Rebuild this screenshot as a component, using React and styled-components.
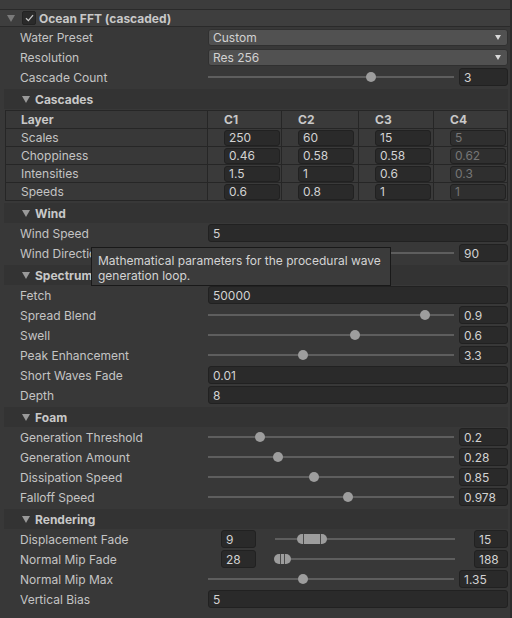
import React from "react";
import styled, { createGlobalStyle } from "styled-components";

const GlobalStyle = createGlobalStyle`
  body {
    margin: 0;
    background: #383838;
    font-family: Inter, "Noto Sans", sans-serif;
    font-size: 12px;
    color: #c4c4c4;
  }
`;

const Panel = styled.div`
  position: relative;
  width: 512px;
  height: 618px;
  overflow: hidden;
  background: #383838;
  box-sizing: border-box;
  border-right: 2px solid #2c2c2c;
`;

const TopStrip = styled.div`
  height: 9px;
  background: #3c3c3c;
  border-bottom: 1px solid #2a2a2a;
`;

const ComponentHeader = styled.div`
  display: flex;
  align-items: center;
  height: 16px;
  background: #3e3e3e;
  border-bottom: 1px solid #2a2a2a;
  padding-left: 7px;
`;

const FoldArrow = styled.span`
  width: 0;
  height: 0;
  border-left: 4px solid transparent;
  border-right: 4px solid transparent;
  border-top: 7px solid ${p => p.$color || "#7a7a7a"};
  margin-right: ${p => p.$gap || 6}px;
`;

const CheckBox = styled.span`
  display: flex;
  align-items: center;
  justify-content: center;
  width: 12px;
  height: 12px;
  background: #2a2a2a;
  border: 1px solid #232323;
  border-radius: 2px;
  margin-right: 3px;
`;

const HeaderTitle = styled.span`
  font-weight: 700;
  color: #c8c8c8;
`;

const Body = styled.div`
  padding: 0 2px 0 4px;
`;

const Row = styled.div`
  display: grid;
  grid-template-columns: 188px 1fr;
  align-items: center;
  height: 20px;
  padding-left: 16px;
`;

const Label = styled.span`
  white-space: nowrap;
  overflow: hidden;
  color: #c4c4c4;
`;

const Dropdown = styled.div`
  display: flex;
  align-items: center;
  justify-content: space-between;
  height: 17px;
  box-sizing: border-box;
  padding: 0 6px 0 4px;
  background: #515151;
  border: 1px solid #303030;
  border-radius: 3px;
  color: #d2d2d2;
`;

const DropArrow = styled.span`
  width: 0;
  height: 0;
  border-left: 3.5px solid transparent;
  border-right: 3.5px solid transparent;
  border-top: 5px solid #d8d8d8;
`;

const Field = styled.div`
  display: flex;
  align-items: center;
  height: ${p => p.$h || 18}px;
  width: ${p => (p.$w ? `${p.$w}px` : "auto")};
  box-sizing: border-box;
  padding-left: 4px;
  background: ${p => (p.$disabled ? "#2f2f2f" : "#2a2a2a")};
  border: 1px solid #212121;
  border-radius: 3px;
  color: ${p => (p.$disabled ? "#767676" : "#d2d2d2")};
`;

const SliderWrap = styled.div`
  display: grid;
  grid-template-columns: 1fr 49px;
  gap: 5px;
  align-items: center;
`;

const Track = styled.div`
  position: relative;
  height: 2px;
  background: #5e5e5e;
`;

const Thumb = styled.span`
  position: absolute;
  top: -4px;
  width: 10px;
  height: 10px;
  margin-left: -5px;
  border-radius: 50%;
  background: #9d9d9d;
`;

const MinMaxWrap = styled.div`
  display: grid;
  grid-template-columns: 35px 1fr 34px;
  gap: 19px;
  align-items: center;
  padding-left: 13px;
`;

const RangeThumb = styled.span`
  position: absolute;
  top: -4px;
  height: 10px;
  border-radius: 5px;
  background: #9d9d9d;
  &::before,
  &::after {
    content: "";
    position: absolute;
    top: 0;
    width: 1px;
    height: 10px;
    background: #4a4a4a;
  }
  &::before {
    left: ${p => p.$inset}px;
  }
  &::after {
    right: ${p => p.$inset}px;
  }
`;

const SectionHeader = styled.div`
  display: flex;
  align-items: center;
  height: 20px;
  margin-top: 2px;
  padding-left: 18px;
  background: #333333;
  font-weight: 700;
  color: #c8c8c8;
`;

const Table = styled.div`
  display: grid;
  grid-template-columns: 201px 74px 77px 75px 1fr;
  grid-auto-rows: 18px;
  margin: 1px 0 1px 1px;
  border: 1px solid #262626;
  border-bottom: none;
`;

const Cell = styled.div`
  display: flex;
  align-items: center;
  padding-left: ${p => (p.$first ? 15 : 16)}px;
  border-bottom: 1px solid #262626;
  border-left: ${p => (p.$first ? "none" : "1px solid #262626")};
  font-weight: ${p => (p.$head ? 700 : 400)};
  color: ${p => (p.$head ? "#c8c8c8" : "#c4c4c4")};
  background: ${p => (p.$first ? "transparent" : "#3a3a3a")};
`;

const Tooltip = styled.div`
  position: absolute;
  left: 91px;
  top: 247px;
  width: 300px;
  height: 39px;
  box-sizing: border-box;
  padding: 5px 6px;
  background: #3b3b3b;
  border: 1px solid #191919;
  color: #d4d4d4;
  line-height: 15px;
`;

const Slider = ({ pct, value }) => (
  <SliderWrap>
    <Track>
      <Thumb style={{ left: `calc(5px + (100% - 10px) * ${pct})` }} />
    </Track>
    <Field>{value}</Field>
  </SliderWrap>
);

const MinMax = ({ min, max, left, width, inset }) => (
  <MinMaxWrap>
    <Field>{min}</Field>
    <Track>
      <RangeThumb $inset={inset} style={{ left, width }} />
    </Track>
    <Field>{max}</Field>
  </MinMaxWrap>
);

const Section = ({ title }) => (
  <SectionHeader>
    <FoldArrow $color="#9a9a9a" $gap={5} />
    {title}
  </SectionHeader>
);

const cascades = [
  ["Scales", "250", "60", "15", "5"],
  ["Choppiness", "0.46", "0.58", "0.58", "0.62"],
  ["Intensities", "1.5", "1", "0.6", "0.3"],
  ["Speeds", "0.6", "0.8", "1", "1"],
];

const sliderRow = (label, pct, value) => (
  <Row key={label}>
    <Label>{label}</Label>
    <Slider pct={pct} value={value} />
  </Row>
);

const fieldRow = (label, value) => (
  <Row key={label}>
    <Label>{label}</Label>
    <Field>{value}</Field>
  </Row>
);

export default function App() {
  return (
    <Panel>
      <GlobalStyle />
      <TopStrip />
      <ComponentHeader>
        <FoldArrow $gap={7} />
        <CheckBox>
          <svg width="9" height="8" viewBox="0 0 9 8">
            <path d="M1 4.2 L3.4 6.6 L8 1.2" fill="none" stroke="#c8c8c8" strokeWidth="1.3" />
          </svg>
        </CheckBox>
        <HeaderTitle>Ocean FFT (cascaded)</HeaderTitle>
      </ComponentHeader>
      <Body>
        <Row>
          <Label>Water Preset</Label>
          <Dropdown>Custom<DropArrow /></Dropdown>
        </Row>
        <Row>
          <Label>Resolution</Label>
          <Dropdown>Res 256<DropArrow /></Dropdown>
        </Row>
        {sliderRow("Cascade Count", 0.668, "3")}

        <Section title="Cascades" />
        <Table>
          <Cell $first $head>Layer</Cell>
          <Cell $head>C1</Cell>
          <Cell $head>C2</Cell>
          <Cell $head>C3</Cell>
          <Cell $head>C4</Cell>
          {cascades.map(r => (
            <React.Fragment key={r[0]}>
              <Cell $first>{r[0]}</Cell>
              {r.slice(1).map((v, i) => (
                <Cell key={i}>
                  <Field $h={16} $w={56} $disabled={i === 3}>{v}</Field>
                </Cell>
              ))}
            </React.Fragment>
          ))}
        </Table>

        <Section title="Wind" />
        {fieldRow("Wind Speed", "5")}
        {sliderRow("Wind Direction", 0.25, "90")}

        <Section title="Spectrum" />
        {fieldRow("Fetch", "50000")}
        {sliderRow("Spread Blend", 0.898, "0.9")}
        {sliderRow("Swell", 0.6, "0.6")}
        {sliderRow("Peak Enhancement", 0.383, "3.3")}
        {fieldRow("Short Waves Fade", "0.01")}
        {fieldRow("Depth", "8")}

        <Section title="Foam" />
        {sliderRow("Generation Threshold", 0.2, "0.2")}
        {sliderRow("Generation Amount", 0.277, "0.28")}
        {sliderRow("Dissipation Speed", 0.426, "0.85")}
        {sliderRow("Falloff Speed", 0.57, "0.978")}

        <Section title="Rendering" />
        <Row>
          <Label>Displacement Fade</Label>
          <MinMax min="9" max="15" left="22px" width="30px" inset={6} />
        </Row>
        <Row>
          <Label>Normal Mip Fade</Label>
          <MinMax min="28" max="188" left="-1px" width="17px" inset={6} />
        </Row>
        {sliderRow("Normal Mip Max", 0.383, "1.35")}
        {fieldRow("Vertical Bias", "5")}
      </Body>
      <Tooltip>
        Mathematical parameters for the procedural wave
        <br />
        generation loop.
      </Tooltip>
    </Panel>
  );
}
